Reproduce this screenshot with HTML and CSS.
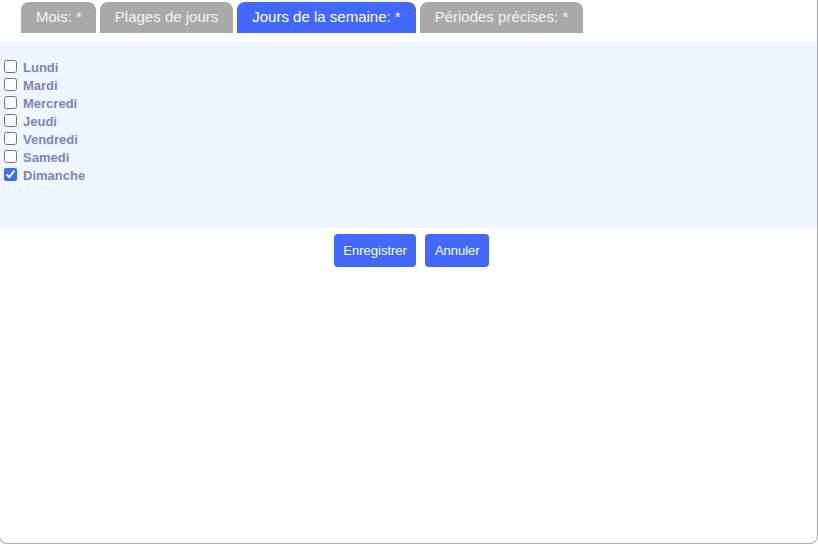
FILE: index.html
```html
<!DOCTYPE html>
<html lang="fr">
  <head>
    <meta charset="UTF-8" />
    <title>Jours de la semaine</title>
    <link rel="stylesheet" href="styles.css">
  </head>
  <body>
    <div class="frame">
      <div class="tabs">
        <span class="tab">Mois: *</span>
        <span class="tab">Plages de jours</span>
        <span class="tab active">Jours de la semaine: *</span>
        <span class="tab">Périodes précises: *</span>
      </div>

      <div class="panel">
        <label class="day"><input type="checkbox" /> Lundi</label>
        <label class="day"><input type="checkbox" /> Mardi</label>
        <label class="day"><input type="checkbox" /> Mercredi</label>
        <label class="day"><input type="checkbox" /> Jeudi</label>
        <label class="day"><input type="checkbox" /> Vendredi</label>
        <label class="day"><input type="checkbox" /> Samedi</label>
        <label class="day"><input type="checkbox" checked /> Dimanche</label>
      </div>

      <div class="actions">
        <button class="btn">Enregistrer</button>
        <button class="btn">Annuler</button>
      </div>
    </div>
  </body>
</html>
```

FILE: styles.css
```css
body {
  margin: 0;
  font-family: "Liberation Sans", Arial, sans-serif;
  background: #ffffff;
}

.frame {
  box-sizing: border-box;
  width: 819px;
  height: 544px;
  margin-left: -1px;
  border: 1px solid #a8a8a8;
  border-top: none;
  border-radius: 0 0 8px 8px;
  background: #ffffff;
}

.tabs {
  display: flex;
  gap: 4px;
  padding: 2px 0 0 21px;
  margin-bottom: 8px;
}

.tab {
  height: 31px;
  line-height: 30px;
  padding: 0 15px;
  border-radius: 8px 8px 0 0;
  background: #a9a9a9;
  color: #f4f4f4;
  font-size: 15px;
}

.tab:first-child {
  padding-right: 14px;
}

.tab.active {
  background: #4169ff;
  color: #ffffff;
}

.panel {
  display: flex;
  flex-direction: column;
  height: 187px;
  box-sizing: border-box;
  padding: 17px 0 0 0;
  background: #f0f6ff;
}

.day {
  display: flex;
  align-items: center;
  height: 18px;
  font-size: 13px;
  font-weight: bold;
  color: #7f84bb;
}

.day input {
  width: 13px;
  height: 13px;
  margin: 0 6px 1px 4px;
  accent-color: #3d6bff;
}

.actions {
  display: flex;
  justify-content: center;
  gap: 9px;
  margin-top: 6px;
  padding-left: 6px;
}

.btn {
  height: 33px;
  padding: 0 9.5px;
  border: none;
  border-radius: 4px;
  background: #4169ff;
  color: #ffffff;
  font-family: "Liberation Sans", Arial, sans-serif;
  font-size: 13px;
  cursor: pointer;
}
```
